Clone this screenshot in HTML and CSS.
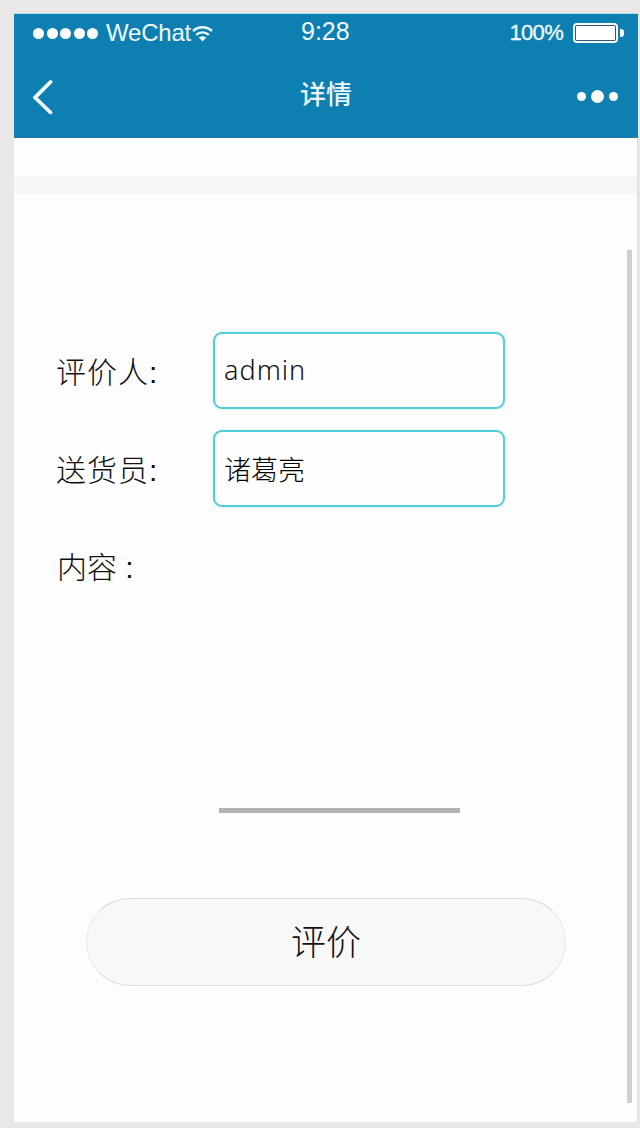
FILE: index.html
```html
<!DOCTYPE html>
<html>
<head>
    <title>详情</title>
    <link rel="stylesheet" href="styles.css">
</head>
<body>
    <div class="phone">
        <div class="header">
            <div class="status-bar">
                <div class="status-left">
                    <div class="signal">
                        <span></span><span></span><span></span><span></span><span></span>
                    </div>
                    <span class="carrier">WeChat</span>
                    <svg class="wifi" width="21" height="17" viewBox="0 0 21 17">
                        <path d="M1 6C6.500 1 14.500 1 20 6" fill="none" stroke="#eefaff" stroke-width="2.400"/>
                        <path d="M4.200 9.800C7.800 6.600 13.200 6.600 16.800 9.800" fill="none" stroke="#eefaff" stroke-width="2.400"/>
                        <path d="M6.800 12.400C9 11 12 11 14.200 12.400L10.500 16.500Z" fill="#eefaff"/>
                    </svg>
                </div>
                <span class="time">9:28</span>
                <div class="status-right">
                    <span class="percent">100%</span>
                    <div class="battery"><div class="battery-fill"></div></div>
                    <div class="battery-tip"></div>
                </div>
            </div>
            <div class="nav-bar">
                <svg class="back" width="22" height="36" viewBox="0 0 22 36">
                    <path d="M19.500 3L4 18.500L19.500 33.500" fill="none" stroke="#f4fcff" stroke-width="3.800" stroke-linecap="round" stroke-linejoin="round"/>
                </svg>
                <span class="nav-title">详情</span>
                <div class="more">
                    <span class="dot"></span>
                    <span class="dot big"></span>
                    <span class="dot"></span>
                </div>
            </div>
        </div>

        <div class="top-space"></div>
        <div class="band"></div>

        <div class="content">
            <div class="form-group">
                <label class="field-label">评价人:</label>
                <div class="field-box latin">admin</div>
            </div>
            <div class="form-group">
                <label class="field-label">送货员:</label>
                <div class="field-box">诸葛亮</div>
            </div>
            <div class="content-label">内容 :</div>
            <div class="text-line"></div>
            <button class="submit-btn" type="button">评价</button>
        </div>

        <div class="scrollbar"></div>
    </div>
</body>
</html>
```

FILE: styles.css
```css
* {
    box-sizing: border-box;
}

html, body {
    margin: 0;
    height: 1128px;
    overflow: hidden;
}

body {
    padding: 14px 2px 6px 14px;
    background-color: #e9e8e6;
    font-family: "Liberation Sans", "Noto Sans CJK SC", sans-serif;
}

.phone {
    position: relative;
    display: flex;
    flex-direction: column;
    height: 100%;
    background-color: #fdfdfe;
}

.header {
    height: 124px;
    background-color: #0e7fb1;
    border-bottom: 1px solid #2a7a9e;
    box-shadow: 0 -1px 0 #b5deec;
    color: #eefaff;
}

.status-bar {
    display: flex;
    align-items: center;
    justify-content: space-between;
    height: 38px;
    padding: 0 14px 0 19px;
    position: relative;
}

.status-left, .status-right, .signal {
    display: flex;
    align-items: center;
}

.signal {
    gap: 2.500px;
    margin-right: 8px;
}

.signal span {
    width: 11px;
    height: 11px;
    border-radius: 50%;
    background-color: #fff;
}

.carrier {
    font-size: 24px;
    letter-spacing: -0.2px;
}

.wifi {
    margin-left: 1px;
    margin-top: 1px;
}

.time {
    position: absolute;
    left: 287px;
    top: 3px;
    font-size: 25px;
}

.percent {
    font-size: 22px;
    margin-right: 10px;
    letter-spacing: -0.7px;
    -webkit-text-stroke: 0.3px #eefaff;
}

.battery {
    width: 45px;
    height: 20px;
    padding: 1px;
    background-color: #33566e;
    border: 2px solid #f4fcff;
    border-radius: 4px;
}

.battery-fill {
    height: 100%;
    background-color: #fff;
}

.battery-tip {
    width: 4px;
    height: 8px;
    margin-left: 2px;
    background-color: #f4fcff;
    border-radius: 0 3px 3px 0;
}

.nav-bar {
    display: flex;
    align-items: center;
    justify-content: space-between;
    height: 85px;
    padding: 4px 20px 0 17px;
    position: relative;
}

.nav-title {
    position: absolute;
    left: 0;
    right: 0;
    top: 25px;
    line-height: 36px;
    text-align: center;
    font-size: 26px;
    font-weight: 500;
    color: #eaf6fb;
}

.more {
    display: flex;
    align-items: center;
    gap: 5px;
}

.dot {
    width: 9px;
    height: 9px;
    border-radius: 50%;
    background-color: #fff;
}

.dot.big {
    width: 13px;
    height: 13px;
}

.top-space {
    height: 38px;
    background-color: #fefefe;
    border-right: 1px solid #dedede;
}

.band {
    height: 18px;
    background-color: #f6f6f7;
    border-right: 1px solid #dedede;
}

.content {
    flex: 1;
    padding: 138px 0 0 42px;
    border-right: 1px solid #dedede;
}

.form-group {
    display: flex;
    align-items: center;
    height: 77px;
    margin-bottom: 21px;
}

.field-label {
    width: 157px;
    margin-top: -1px;
    font-size: 30px;
    font-weight: 300;
    letter-spacing: 1px;
    color: #111;
}

.field-box {
    display: flex;
    align-items: center;
    width: 292px;
    height: 77px;
    padding-left: 9px;
    background-color: #fefefe;
    border: 2px solid #55cdd6;
    border-radius: 9px;
    box-shadow: 0 0 2px #a5e6ea;
    font-size: 27px;
    font-weight: 300;
    color: #000;
}

.field-box.latin {
    font-family: "Noto Sans", sans-serif;
    letter-spacing: 1px;
    padding-bottom: 2px;
    color: #111;
}

.content-label {
    margin: 39px 0 0 1px;
    height: 48px;
    line-height: 44px;
    font-size: 30px;
    font-weight: 300;
    color: #111;
}

.text-line {
    width: 241px;
    height: 5px;
    margin: 214px 0 0 163px;
    background-color: #b3b3b3;
}

.submit-btn {
    display: block;
    width: 480px;
    height: 88px;
    margin: 85px 0 0 30px;
    padding: 0 0 5px;
    background-color: #f8f8f9;
    border: 1px solid #dcdcdc;
    border-left-color: #e8e8e8;
    border-right-color: #e8e8e8;
    border-radius: 44px;
    font-family: inherit;
    font-size: 35px;
    font-weight: 300;
    color: #111;
}

.scrollbar {
    position: absolute;
    top: 236px;
    right: 6px;
    width: 5px;
    height: 853px;
    background-color: #cfcfcf;
}
```
